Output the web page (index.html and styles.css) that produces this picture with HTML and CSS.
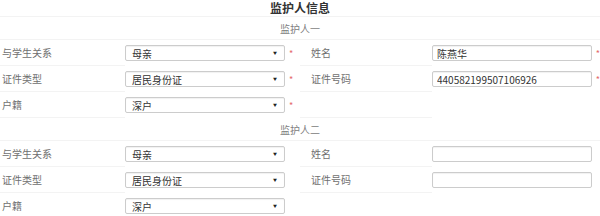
FILE: index.html
```html
<!DOCTYPE html>
<html lang="zh-CN">
<head>
  <meta charset="UTF-8">
  <title>监护人信息</title>
  <link rel="stylesheet" href="styles.css">
</head>
<body>

  <h2 class="title">监护人信息</h2>

  <div class="group">
    <div class="group-title">监护人一</div>
    <div class="row">
      <label class="cell-label">与学生关系</label>
      <div class="cell-field">
        <div class="select">母亲<span class="arrow">▼</span></div>
        <span class="star">*</span>
      </div>
      <label class="cell-label right">姓名</label>
      <div class="cell-field">
        <input type="text" value="陈燕华">
        <span class="star">*</span>
      </div>
    </div>
    <div class="row">
      <label class="cell-label">证件类型</label>
      <div class="cell-field">
        <div class="select">居民身份证<span class="arrow">▼</span></div>
        <span class="star">*</span>
      </div>
      <label class="cell-label right">证件号码</label>
      <div class="cell-field">
        <input type="text" value="440582199507106926">
        <span class="star">*</span>
      </div>
    </div>
    <div class="row">
      <label class="cell-label">户籍</label>
      <div class="cell-field">
        <div class="select">深户<span class="arrow">▼</span></div>
        <span class="star">*</span>
      </div>
      <div class="cell-label right"></div>
      <div class="cell-field"></div>
    </div>
  </div>

  <div class="group">
    <div class="group-title">监护人二</div>
    <div class="row">
      <label class="cell-label">与学生关系</label>
      <div class="cell-field">
        <div class="select">母亲<span class="arrow">▼</span></div>
        <span class="star hidden">*</span>
      </div>
      <label class="cell-label right">姓名</label>
      <div class="cell-field">
        <input type="text" value="">
        <span class="star hidden">*</span>
      </div>
    </div>
    <div class="row">
      <label class="cell-label">证件类型</label>
      <div class="cell-field">
        <div class="select">居民身份证<span class="arrow">▼</span></div>
        <span class="star hidden">*</span>
      </div>
      <label class="cell-label right">证件号码</label>
      <div class="cell-field">
        <input type="text" value="">
        <span class="star hidden">*</span>
      </div>
    </div>
    <div class="row">
      <label class="cell-label">户籍</label>
      <div class="cell-field">
        <div class="select">深户<span class="arrow">▼</span></div>
        <span class="star hidden">*</span>
      </div>
      <div class="cell-label right"></div>
      <div class="cell-field"></div>
    </div>
  </div>

</body>
</html>
```

FILE: styles.css
```css
body {
  margin: 0;
  padding: 0;
  background: #fff;
  font-family: "Noto Sans CJK SC", "Noto Sans", sans-serif;
  font-size: 10px;
  color: #555;
  overflow: hidden;
}

.title {
  margin: 0;
  height: 16px;
  line-height: 16px;
  text-align: center;
  font-size: 12px;
  font-weight: bold;
  color: #333;
  border-bottom: 1px solid #f3f3f3;
}

.group-title {
  height: 21px;
  line-height: 21px;
  padding-top: 1px;
  text-align: center;
  color: #808080;
  border-bottom: 1px solid #f3f3f3;
}

.row {
  display: grid;
  grid-template-columns: 125px 175px 132px 168px;
  height: 26px;
  align-items: center;
}

.cell-label {
  height: 100%;
  display: flex;
  align-items: center;
  padding-left: 2px;
  color: #707070;
  border-bottom: 1px solid #f3f3f3;
  box-sizing: border-box;
}

.cell-label.right {
  padding-left: 11px;
}

.cell-field {
  display: flex;
  align-items: center;
}

.select, .cell-field input {
  width: 160px;
  height: 16px;
  box-sizing: border-box;
  border: 1px solid #ccc;
  border-radius: 2px;
  background: #fff;
  font-family: inherit;
  font-size: 10px;
  color: #333;
  padding: 0 4px;
  box-shadow: inset 0 1px 1px rgba(0, 0, 0, 0.06);
}

.select {
  display: flex;
  align-items: center;
  justify-content: space-between;
  padding-left: 6px;
}

.arrow {
  font-size: 4px;
  color: #222;
  margin-right: 3px;
}

.cell-field input {
  outline: none;
}

.star {
  color: #e46a6a;
  margin-left: 4px;
  font-size: 9px;
}

.star.hidden {
  visibility: hidden;
}
```
